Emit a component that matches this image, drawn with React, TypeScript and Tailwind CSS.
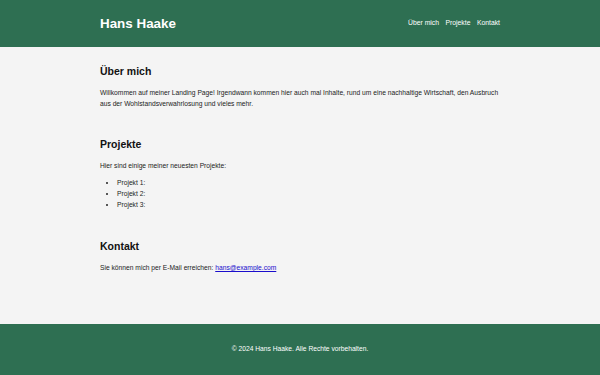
export default function App() {
  return (
    <div className="min-h-[375px] flex flex-col bg-[#f4f4f4] text-[#222]" style={{ fontFamily: '"Liberation Sans", Arial, sans-serif' }}>
      <header className="bg-[#2e6f52] h-[47px] shrink-0">
        <div className="w-[400px] mx-auto h-full flex items-center justify-between">
          <h1 className="text-[13.4px] font-bold text-white leading-none">Hans Haake</h1>
          <nav className="flex gap-[6.5px] text-[6.8px] text-white">
            <a>Über mich</a>
            <a>Projekte</a>
            <a>Kontakt</a>
          </nav>
        </div>
      </header>
      <main className="flex-1 w-[400px] mx-auto pt-[17px] pb-[51px] text-[6.7px] leading-[11px]">
        <section>
          <h2 className="text-[10.5px] leading-[14px] font-bold text-[#111]">Über mich</h2>
          <p className="mt-[9px]">
            Willkommen auf meiner Landing Page! Irgendwann kommen hier auch mal Inhalte, rund um eine nachhaltige Wirtschaft, den Ausbruch aus der Wohlstandsverwahrlosung und vieles mehr.
          </p>
        </section>
        <section className="mt-[28px]">
          <h2 className="text-[10.5px] leading-[14px] font-bold text-[#111]">Projekte</h2>
          <p className="mt-[9px]">Hier sind einige meiner neuesten Projekte:</p>
          <ul className="mt-[6px] list-disc pl-[17px]">
            <li>Projekt 1:</li>
            <li>Projekt 2:</li>
            <li>Projekt 3:</li>
          </ul>
        </section>
        <section className="mt-[29px]">
          <h2 className="text-[10.5px] leading-[14px] font-bold text-[#111]">Kontakt</h2>
          <p className="mt-[9px]">
            Sie können mich per E-Mail erreichen:{" "}
            <a href="#" className="text-[#1a0dcc] underline">hans@example.com</a>
          </p>
        </section>
      </main>
      <footer className="bg-[#2e6f52] h-[51px] shrink-0 flex items-center justify-center text-white text-[6.7px]">
        © 2024 Hans Haake. Alle Rechte vorbehalten.
      </footer>
    </div>
  );
}
